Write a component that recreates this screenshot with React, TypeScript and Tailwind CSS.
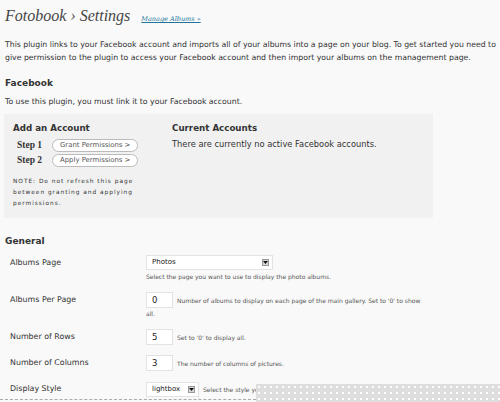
import React from "react";

function SelectBox({ value, width }: { value: string; width: string }) {
  return (
    <div className={`flex items-center h-[15px] bg-white border border-[#e3e3e3] pl-[5px] pr-[3px] ${width}`}>
      <span className="flex-1 text-[7px] text-[#222] leading-none">{value}</span>
      <span className="w-[7px] h-[7px] bg-[#d8d8d8] border border-[#999] flex items-center justify-center">
        <svg width="5" height="3" viewBox="0 0 5 3">
          <path d="M0 0 L5 0 L2.5 3 Z" fill="#111" />
        </svg>
      </span>
    </div>
  );
}

function TextBox({ value }: { value: string }) {
  return (
    <div className="w-[27px] h-[16px] bg-white border border-[#e3e3e3] pl-[5px] flex items-center text-[8.5px] text-[#222] leading-none shrink-0">
      {value}
    </div>
  );
}

function PillButton({ label }: { label: string }) {
  return (
    <span className="inline-flex items-center h-[13px] px-[7px] rounded-full border border-[#bbb] bg-white text-[6.9px] text-[#555] leading-none whitespace-nowrap">
      {label}
    </span>
  );
}

export default function App() {
  return (
    <div className="relative w-[500px] h-[402px] overflow-hidden bg-[#f9f9f9] font-['DejaVu_Sans',sans-serif] text-[#333]">
      <div className="px-[5px] pt-[5px]">
        <div className="flex items-baseline">
          <h2 className="font-['Liberation_Serif',serif] italic text-[16px] leading-[22px] text-[#464646]">
            Fotobook › Settings
          </h2>
          <a className="ml-[11px] font-['DejaVu_Serif',serif] italic text-[6.5px] text-[#21759b] underline">
            Manage Albums »
          </a>
        </div>

        <p className="mt-[11px] text-[7.75px] leading-[13px] text-[#333] whitespace-nowrap">
          This plugin links to your Facebook account and imports all of your albums into a page on your blog. To get started you need to
          <br />
          give permission to the plugin to access your Facebook account and then import your albums on the management page.
        </p>

        <h3 className="mt-[13px] font-bold text-[9px] leading-[13px] text-[#333]">Facebook</h3>
        <p className="mt-[5px] text-[7.75px] leading-[13px] text-[#333]">
          To use this plugin, you must link it to your Facebook account.
        </p>

        <div className="mt-[6px] ml-[-1px] w-[429px] h-[104px] bg-[#f1f1f1] flex">
          <div className="w-[168px] pl-[9px] pt-[8px]">
            <div className="font-bold text-[8.7px] leading-[12px] text-[#333]">Add an Account</div>
            <div className="mt-[5px] ml-[4px] flex flex-col gap-[2px]">
              <div className="flex items-center gap-[8px]">
                <span className="font-bold text-[9.5px] leading-none text-[#333] w-[27px] whitespace-nowrap font-['Liberation_Serif',serif]">Step 1</span>
                <PillButton label="Grant Permissions >" />
              </div>
              <div className="flex items-center gap-[8px]">
                <span className="font-bold text-[9.5px] leading-none text-[#333] w-[27px] whitespace-nowrap font-['Liberation_Serif',serif]">Step 2</span>
                <PillButton label="Apply Permissions >" />
              </div>
            </div>
            <p className="mt-[9px] text-[5.8px] tracking-[1px] leading-[11px] text-[#333] whitespace-nowrap">
              NOTE: Do not refresh this page
              <br />
              between granting and applying
              <br />
              permissions.
            </p>
          </div>
          <div className="pt-[8px]">
            <div className="font-bold text-[8.7px] leading-[12px] text-[#333]">Current Accounts</div>
            <p className="mt-[4px] text-[8.3px] leading-[12px] text-[#333]">
              There are currently no active Facebook accounts.
            </p>
          </div>
        </div>

        <h3 className="mt-[17px] font-bold text-[9px] leading-[13px] text-[#333]">General</h3>

        <div className="mt-[2px] flex flex-col">
          <div className="flex py-[5px]">
            <div className="w-[141px] pl-[5px] text-[7.9px] leading-[15px] text-[#333]">Albums Page</div>
            <div>
              <SelectBox value="Photos" width="w-[127px]" />
              <div className="mt-[1px] text-[6px] leading-[11px] text-[#555] whitespace-nowrap">
                Select the page you want to use to display the photo albums.
              </div>
            </div>
          </div>

          <div className="flex py-[5px]">
            <div className="w-[141px] pl-[5px] text-[7.9px] leading-[16px] text-[#333]">Albums Per Page</div>
            <div>
              <div className="flex items-center gap-[4px]">
                <TextBox value="0" />
                <span className="text-[6px] text-[#555] whitespace-nowrap">
                  Number of albums to display on each page of the main gallery. Set to '0' to show
                </span>
              </div>
              <div className="text-[6px] leading-[11px] text-[#555]">all.</div>
            </div>
          </div>

          <div className="flex py-[5px]">
            <div className="w-[141px] pl-[5px] text-[7.9px] leading-[16px] text-[#333]">Number of Rows</div>
            <div className="flex items-center gap-[4px]">
              <TextBox value="5" />
              <span className="text-[6px] text-[#555]">Set to '0' to display all.</span>
            </div>
          </div>

          <div className="flex py-[5px]">
            <div className="w-[141px] pl-[5px] text-[7.9px] leading-[16px] text-[#333]">Number of Columns</div>
            <div className="flex items-center gap-[4px]">
              <TextBox value="3" />
              <span className="text-[6px] text-[#555]">The number of columns of pictures.</span>
            </div>
          </div>

          <div className="flex py-[5px]">
            <div className="w-[141px] pl-[5px] text-[7.9px] leading-[16px] text-[#333]">Display Style</div>
            <div className="flex items-center gap-[4px]">
              <SelectBox value="lightbox" width="w-[53px]" />
              <span className="text-[6px] text-[#555] whitespace-nowrap">Select the style you</span>
            </div>
          </div>
        </div>
      </div>

      <div className="absolute left-0 bottom-[2px] w-[256px] border-t border-dashed border-[#aaa]" />
      <div className="absolute left-[256px] top-[384px] w-[244px] h-[18px] bg-[#dedede] bg-[radial-gradient(circle,#ffffff_0.8px,transparent_1px)] bg-[length:6px_6px]" />
    </div>
  );
}
